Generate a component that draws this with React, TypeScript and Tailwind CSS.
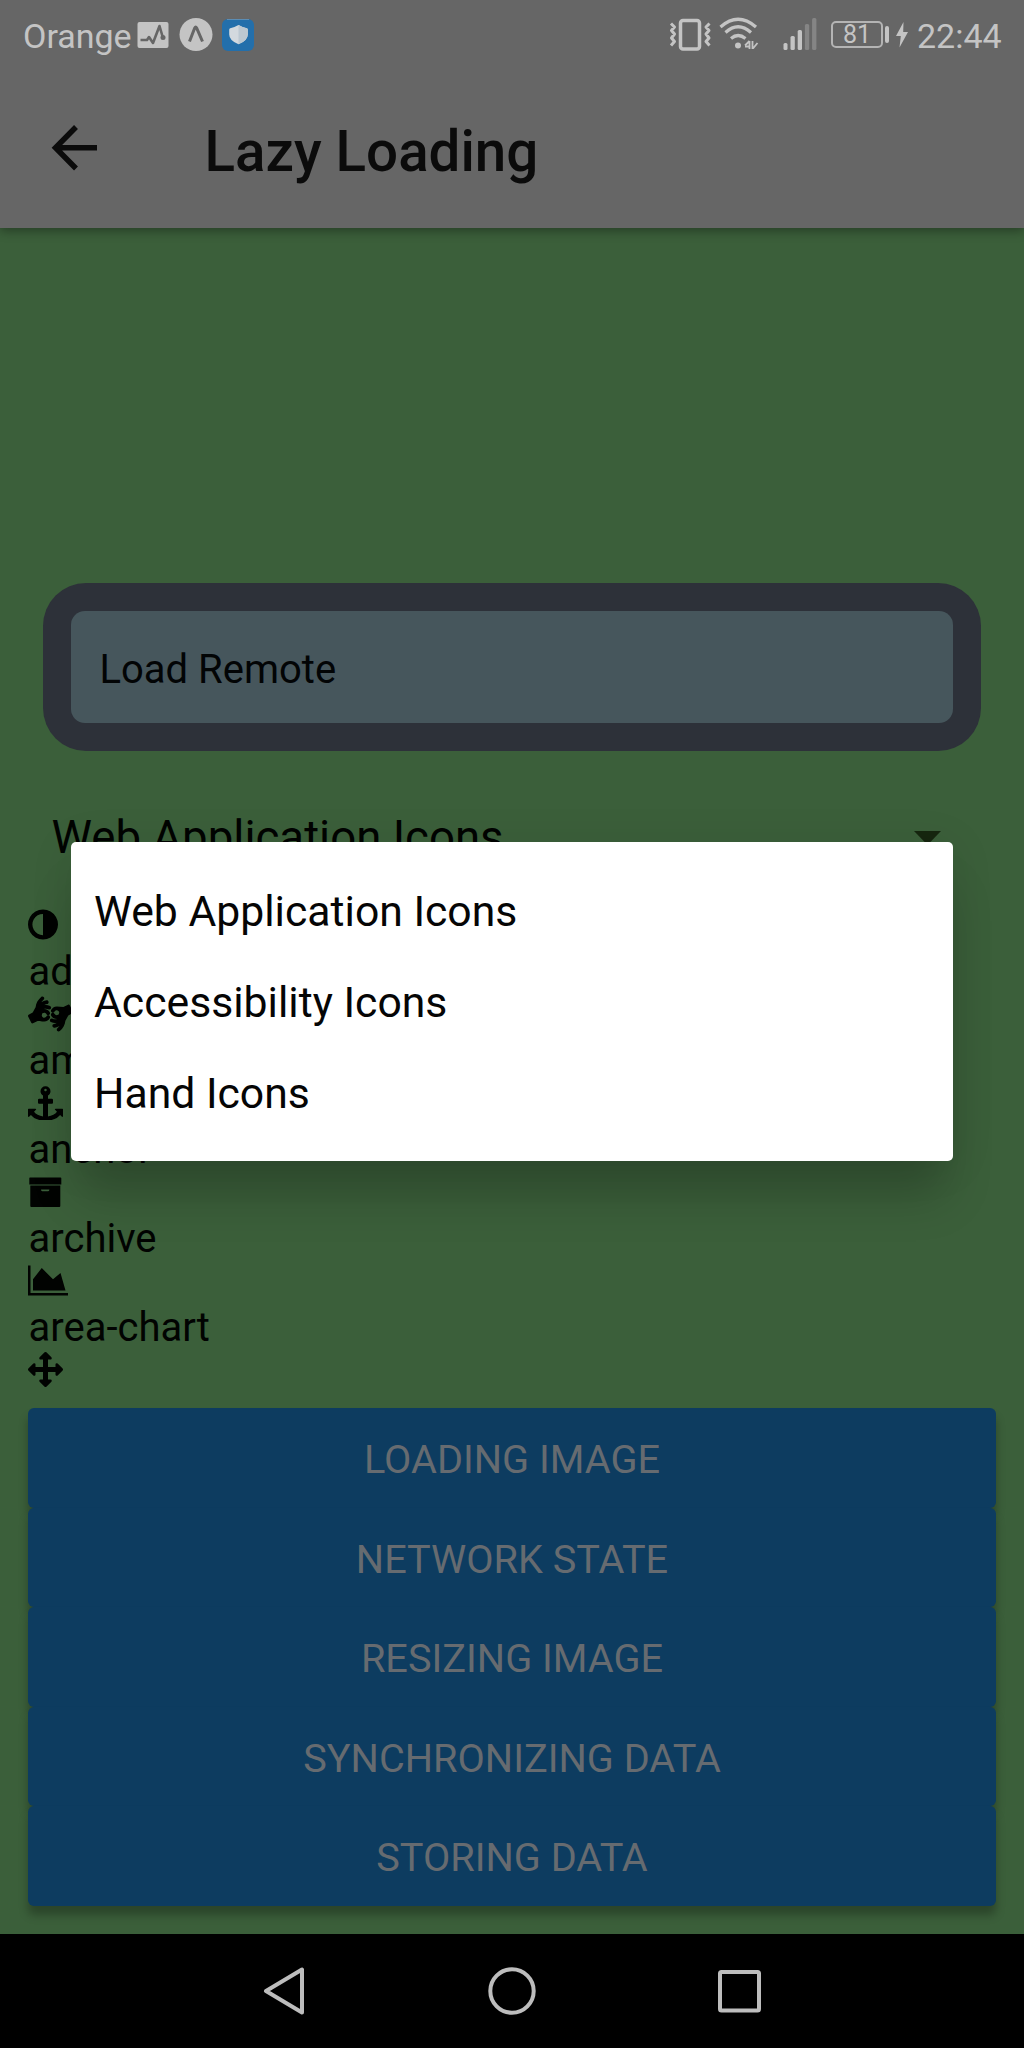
import React from "react";
import { FaAmericanSignLanguageInterpreting } from "react-icons/fa";

const ADJUST =
  "M896 1440v-1088q-148 0-273 73t-198 198-73 273 73 273 198 198 273 73zm768-544q0 209-103 385.5t-279.5 279.5-385.5 103-385.5-103-279.5-279.5-103-385.5 103-385.5 279.5-279.5 385.5-103 385.5 103 279.5 279.5 103 385.5z";
const ANCHOR =
  "M960 256q0-26-19-45t-45-19-45 19-19 45 19 45 45 19 45-19 19-45zm832 992v352q0 22-20 30-8 2-12 2-12 0-23-9l-93-93q-119 143-318.5 226.5t-429.5 83.5-429.5-83.5-318.5-226.5l-93 93q-9 9-23 9-4 0-12-2-20-8-20-30v-352q0-14 9-23t23-9h352q22 0 30 20 8 19-7 35l-100 100q67 91 189.5 153.5t271.5 82.5v-647h-192q-26 0-45-19t-19-45v-128q0-26 19-45t45-19h192v-163q-58-34-93-92.5t-35-128.5q0-106 75-181t181-75 181 75 75 181q0 70-35 128.5t-93 92.5v163h192q26 0 45 19t19 45v128q0 26-19 45t-45 19h-192v647q149-20 271.5-82.5t189.5-153.5l-100-100q-15-16-7-35 8-20 30-20h352q14 0 23 9t9 23z";
const ARROWS =
  "M1792 896q0 26-19 45l-256 256q-19 19-45 19t-45-19-19-45v-128h-384v384h128q26 0 45 19t19 45-19 45l-256 256q-19 19-45 19t-45-19l-256-256q-19-19-19-45t19-45 45-19h128v-384h-384v128q0 26-19 45t-45 19-45-19l-256-256q-19-19-19-45t19-45l256-256q19-19 45-19t45 19 19 45v128h384v-384h-128q-26 0-45-19t-19-45 19-45l256-256q19-19 45-19t45 19l256 256q19 19 19 45t-19 45-45 19h-128v384h384v-128q0-26 19-45t45-19 45 19l256 256q19 19 19 45z";

function StatusBar() {
  return (
    <div className="flex h-[72px] items-start text-[#c4c4c4]">
      <span className="ml-[23px] mt-[15px] w-[114px] whitespace-nowrap text-[34px] leading-[42px]">Orange</span>
      <svg className="mt-[22px] h-[26px] w-8 shrink-0" viewBox="0 0 32 26" fill="none">
        <rect x=".5" width="31" height="26" rx="2" fill="#c4c4c4" />
        <path d="M3.500 18h6.500l2-3 4 6 6.500-17 3.500 12" stroke="#666" strokeWidth="2.600" strokeLinejoin="round" />
        <circle cx="26" cy="15.500" r="2.500" fill="#666" />
      </svg>
      <svg className="ml-[10px] mt-[18px] h-[33px] w-[34px] shrink-0" viewBox="0 0 34 33" fill="none">
        <circle cx="17" cy="16.500" r="16.500" fill="#c4c4c4" />
        <path d="M10.500 23.500 15.800 9.800q.9-1.800 1.800 0L23.500 23.500" stroke="#666" strokeWidth="3" strokeLinejoin="round" />
      </svg>
      <svg className="ml-[9px] mt-[19px] h-8 w-8 shrink-0" viewBox="0 0 32 32">
        <rect width="32" height="32" rx="6" fill="#236fab" />
        <path d="M5 .5h22" stroke="#5b8db5" />
        <path d="M16.500 6q4 2.300 8.300 3.200 1 .3 1 1.500v4.800q0 6-9.300 9.800Q7.200 21.500 7.200 15.500v-4.800q0-1.200 1-1.500Q12.500 8.300 16.500 6Z" fill="#d3d9de" />
        <path d="M16.500 6q4 2.300 8.300 3.200 1 .3 1 1.500v4.800q0 6-9.300 9.800Z" fill="#bcc8d1" />
      </svg>
      <svg className="ml-[415px] mt-[18px] h-[33px] w-[43px] shrink-0" viewBox="0 0 43 33" fill="none" stroke="#c4c4c4">
        <rect x="11.500" y="2.500" width="19" height="28.500" rx="2.500" strokeWidth="3.500" />
        <path d="M2 5.500 5.500 9l-3 3.500L5.500 16l-3 4L5.500 23.500 2 27.500M40.500 5.500 37 9l3 3.500L37 16l3 4-3 3.500 3.500 4" strokeWidth="3" strokeLinejoin="round" />
      </svg>
      <svg className="ml-[7px] mt-[17px] h-8 w-[40px] shrink-0" viewBox="0 0 40 32" fill="none" stroke="#c4c4c4" strokeWidth="3.200">
        <path d="M1.500 10Q19 -5.500 37 10M6.500 15.500Q19 4 32 15.500M12 21.500q7-6 14.500 0" />
        <circle cx="19" cy="28.500" r="3" fill="#c4c4c4" stroke="none" />
        <path d="M30.500 24v8M26 28.500l4.500-4.500" strokeWidth="1.800" />
        <path d="M26 29.500h4.500M33.500 24v8l5-6" strokeWidth="1.800" />
      </svg>
      <svg className="ml-[24px] mt-[18px] h-8 w-[34px] shrink-0" viewBox="0 0 34 32" fill="#c4c4c4">
        <rect x=".5" y="25" width="4" height="7" rx="1.500" />
        <rect x="7.500" y="18" width="4.300" height="14" rx="1.500" />
        <rect x="14.700" y="12" width="4.300" height="20" rx="1.500" />
        <rect x="21.900" y="6" width="4.300" height="26" rx="1.500" fill="#858585" />
        <rect x="29.100" y="0" width="4.300" height="32" rx="1.500" fill="#858585" />
      </svg>
      <div className="ml-[14px] mt-[21px] flex h-[27px] w-[52px] shrink-0 items-center justify-center rounded-[5px] border-2 border-[#b4b4b4] text-[25px] leading-none">
        81
      </div>
      <div className="ml-[2px] mt-[26px] h-[17px] w-1 shrink-0 rounded-[2px] bg-[#c4c4c4]" />
      <svg className="ml-[6px] mt-[22px] h-[26px] w-[14px] shrink-0" viewBox="0 0 14 26" fill="#c4c4c4">
        <path d="M8.500 0 1 14h4.800L4.500 25.500 13 10H8.200Z" />
      </svg>
      <span className="ml-[8px] mt-[16px] whitespace-nowrap text-[34px] leading-[41px]">22:44</span>
    </div>
  );
}

function Header() {
  return (
    <header className="relative z-10 h-[228px] shrink-0 bg-[#666666] shadow-[0_3px_10px_rgba(0,0,0,0.35)]">
      <StatusBar />
      <div className="flex items-start">
        <svg className="ml-[51px] mt-[53px] h-[46px] w-[47px]" viewBox="0 0 47 46" fill="none" stroke="#0b0b0b" strokeWidth="5.500">
          <path d="M46 22.800H5M25 2 4.500 22.800 25 43.500" />
        </svg>
        <h1 className="ml-[106.500px] mt-[47px] whitespace-nowrap text-[56.500px] font-medium leading-[66px] text-[#0b0b0b]">Lazy Loading</h1>
      </div>
    </header>
  );
}

function Glyph({ d }: { d: string }) {
  return (
    <svg className="h-[35px] w-[35px]" viewBox="0 0 1792 1792" fill="currentColor">
      <path d={d} />
    </svg>
  );
}

const ICONS = [
  {
    name: "adjust",
    icon: (
      <svg className="h-[35px] w-[30px]" viewBox="128 0 1536 1792" fill="currentColor">
        <path d={ADJUST} />
      </svg>
    ),
  },
  {
    name: "american-sign-language-interpreting",
    icon: <FaAmericanSignLanguageInterpreting className="h-[36px] w-[45px]" />,
  },
  { name: "anchor", icon: <Glyph d={ANCHOR} /> },
  {
    name: "archive",
    icon: (
      <svg className="h-[35px] w-[35px]" viewBox="0 0 35 35" fill="currentColor">
        <path d="M2 3.500h30.500q.8 0 .8.800v6.200H1.300V4.300q0-.8.700-.8ZM2.300 11.500h30V32q0 1-1 1h-28q-1 0-1-1ZM13 15.600q0 1.600 1.200 1.600h6q1.200 0 1.200-1.600Z" fillRule="evenodd" />
      </svg>
    ),
  },
  {
    name: "area-chart",
    icon: (
      <svg className="h-[35px] w-[40px]" viewBox="0 0 2048 1792" fill="currentColor">
        <path d="M2048 1536v128h-2048v-1536h128v1408h1920zm-384-1024l256 896h-1664v-576l448-576 576 576z" />
      </svg>
    ),
  },
  { name: "", icon: <Glyph d={ARROWS} /> },
];

const ACTIONS = ["LOADING IMAGE", "NETWORK STATE", "RESIZING IMAGE", "SYNCHRONIZING DATA", "STORING DATA"];
const OPTIONS = ["Web Application Icons", "Accessibility Icons", "Hand Icons"];

export default function App() {
  return (
    <div className="relative flex h-[2048px] w-[1024px] flex-col overflow-hidden bg-[#3b5f3a] font-['Roboto',sans-serif]">
      <Header />
      <main className="flex flex-1 flex-col px-7 pt-[355px]">
        <div className="mx-[15px] h-[168px] shrink-0 rounded-[43px] bg-[#2d3139] p-7">
          <div className="flex h-full items-center rounded-[14px] bg-[#46565c] pl-[28.500px] pt-[5px] text-[40px] text-[#020405]">Load Remote</div>
        </div>
        <div className="mt-[57px] flex h-[60px] shrink-0 items-center justify-between pl-[23.500px] pr-[55px] text-[#010301]">
          <span className="whitespace-nowrap text-[45.600px] leading-[54px]">Web Application Icons</span>
          <svg className="h-[14px] w-[27px]" viewBox="0 0 27 14" fill="#16260f">
            <path d="M0 0h27L13.500 14Z" />
          </svg>
        </div>
        <div className="mt-[39px] h-[501px] shrink-0 overflow-hidden text-[#010301]">
          {ICONS.map((item, i) => (
            <div key={i} className="h-[89.100px] whitespace-nowrap">
              <div className="flex h-[35px] items-center">{item.icon}</div>
              <div className="mt-[6px] pl-[0.500px] text-[40px] leading-[47px]">{item.name}</div>
            </div>
          ))}
        </div>
        <div className="flex h-[498px] shrink-0 flex-col">
          {ACTIONS.map((a) => (
            <button
              key={a}
              className="flex flex-1 items-center justify-center rounded-[6px] bg-[#0d3c60] pt-[4px] text-[39.700px] text-[#666b70] shadow-[0_9px_10px_rgba(0,0,0,0.28)]"
            >
              {a}
            </button>
          ))}
        </div>
      </main>
      <nav className="z-10 mt-auto flex h-[114px] shrink-0 items-center bg-black pl-[263px]">
        <svg className="h-12 w-[42px]" viewBox="0 0 42 48" fill="none" stroke="#bdbdbd" strokeWidth="4" strokeLinejoin="round">
          <path d="M39 2.500v43L3 24Z" />
        </svg>
        <svg className="ml-[183px] h-12 w-12" viewBox="0 0 48 48" fill="none" stroke="#bdbdbd" strokeWidth="4">
          <circle cx="24" cy="24" r="21.700" />
        </svg>
        <svg className="ml-[181px] h-[44px] w-[44px]" viewBox="0 0 44 44" fill="none" stroke="#bdbdbd" strokeWidth="4">
          <rect x="3" y="3" width="39" height="38.500" rx="1.500" />
        </svg>
      </nav>
      <ul className="absolute left-[71px] top-[842px] z-20 h-[318.500px] w-[882px] rounded-[5px] bg-white pt-[24px] shadow-[0_42px_45px_-8px_rgba(0,0,0,0.2),0_4px_45px_rgba(0,0,0,0.09)]">
        {OPTIONS.map((o) => (
          <li key={o} className="flex h-[91px] items-center pl-[23px] text-[42.700px] text-[#050505]">
            {o}
          </li>
        ))}
      </ul>
    </div>
  );
}
